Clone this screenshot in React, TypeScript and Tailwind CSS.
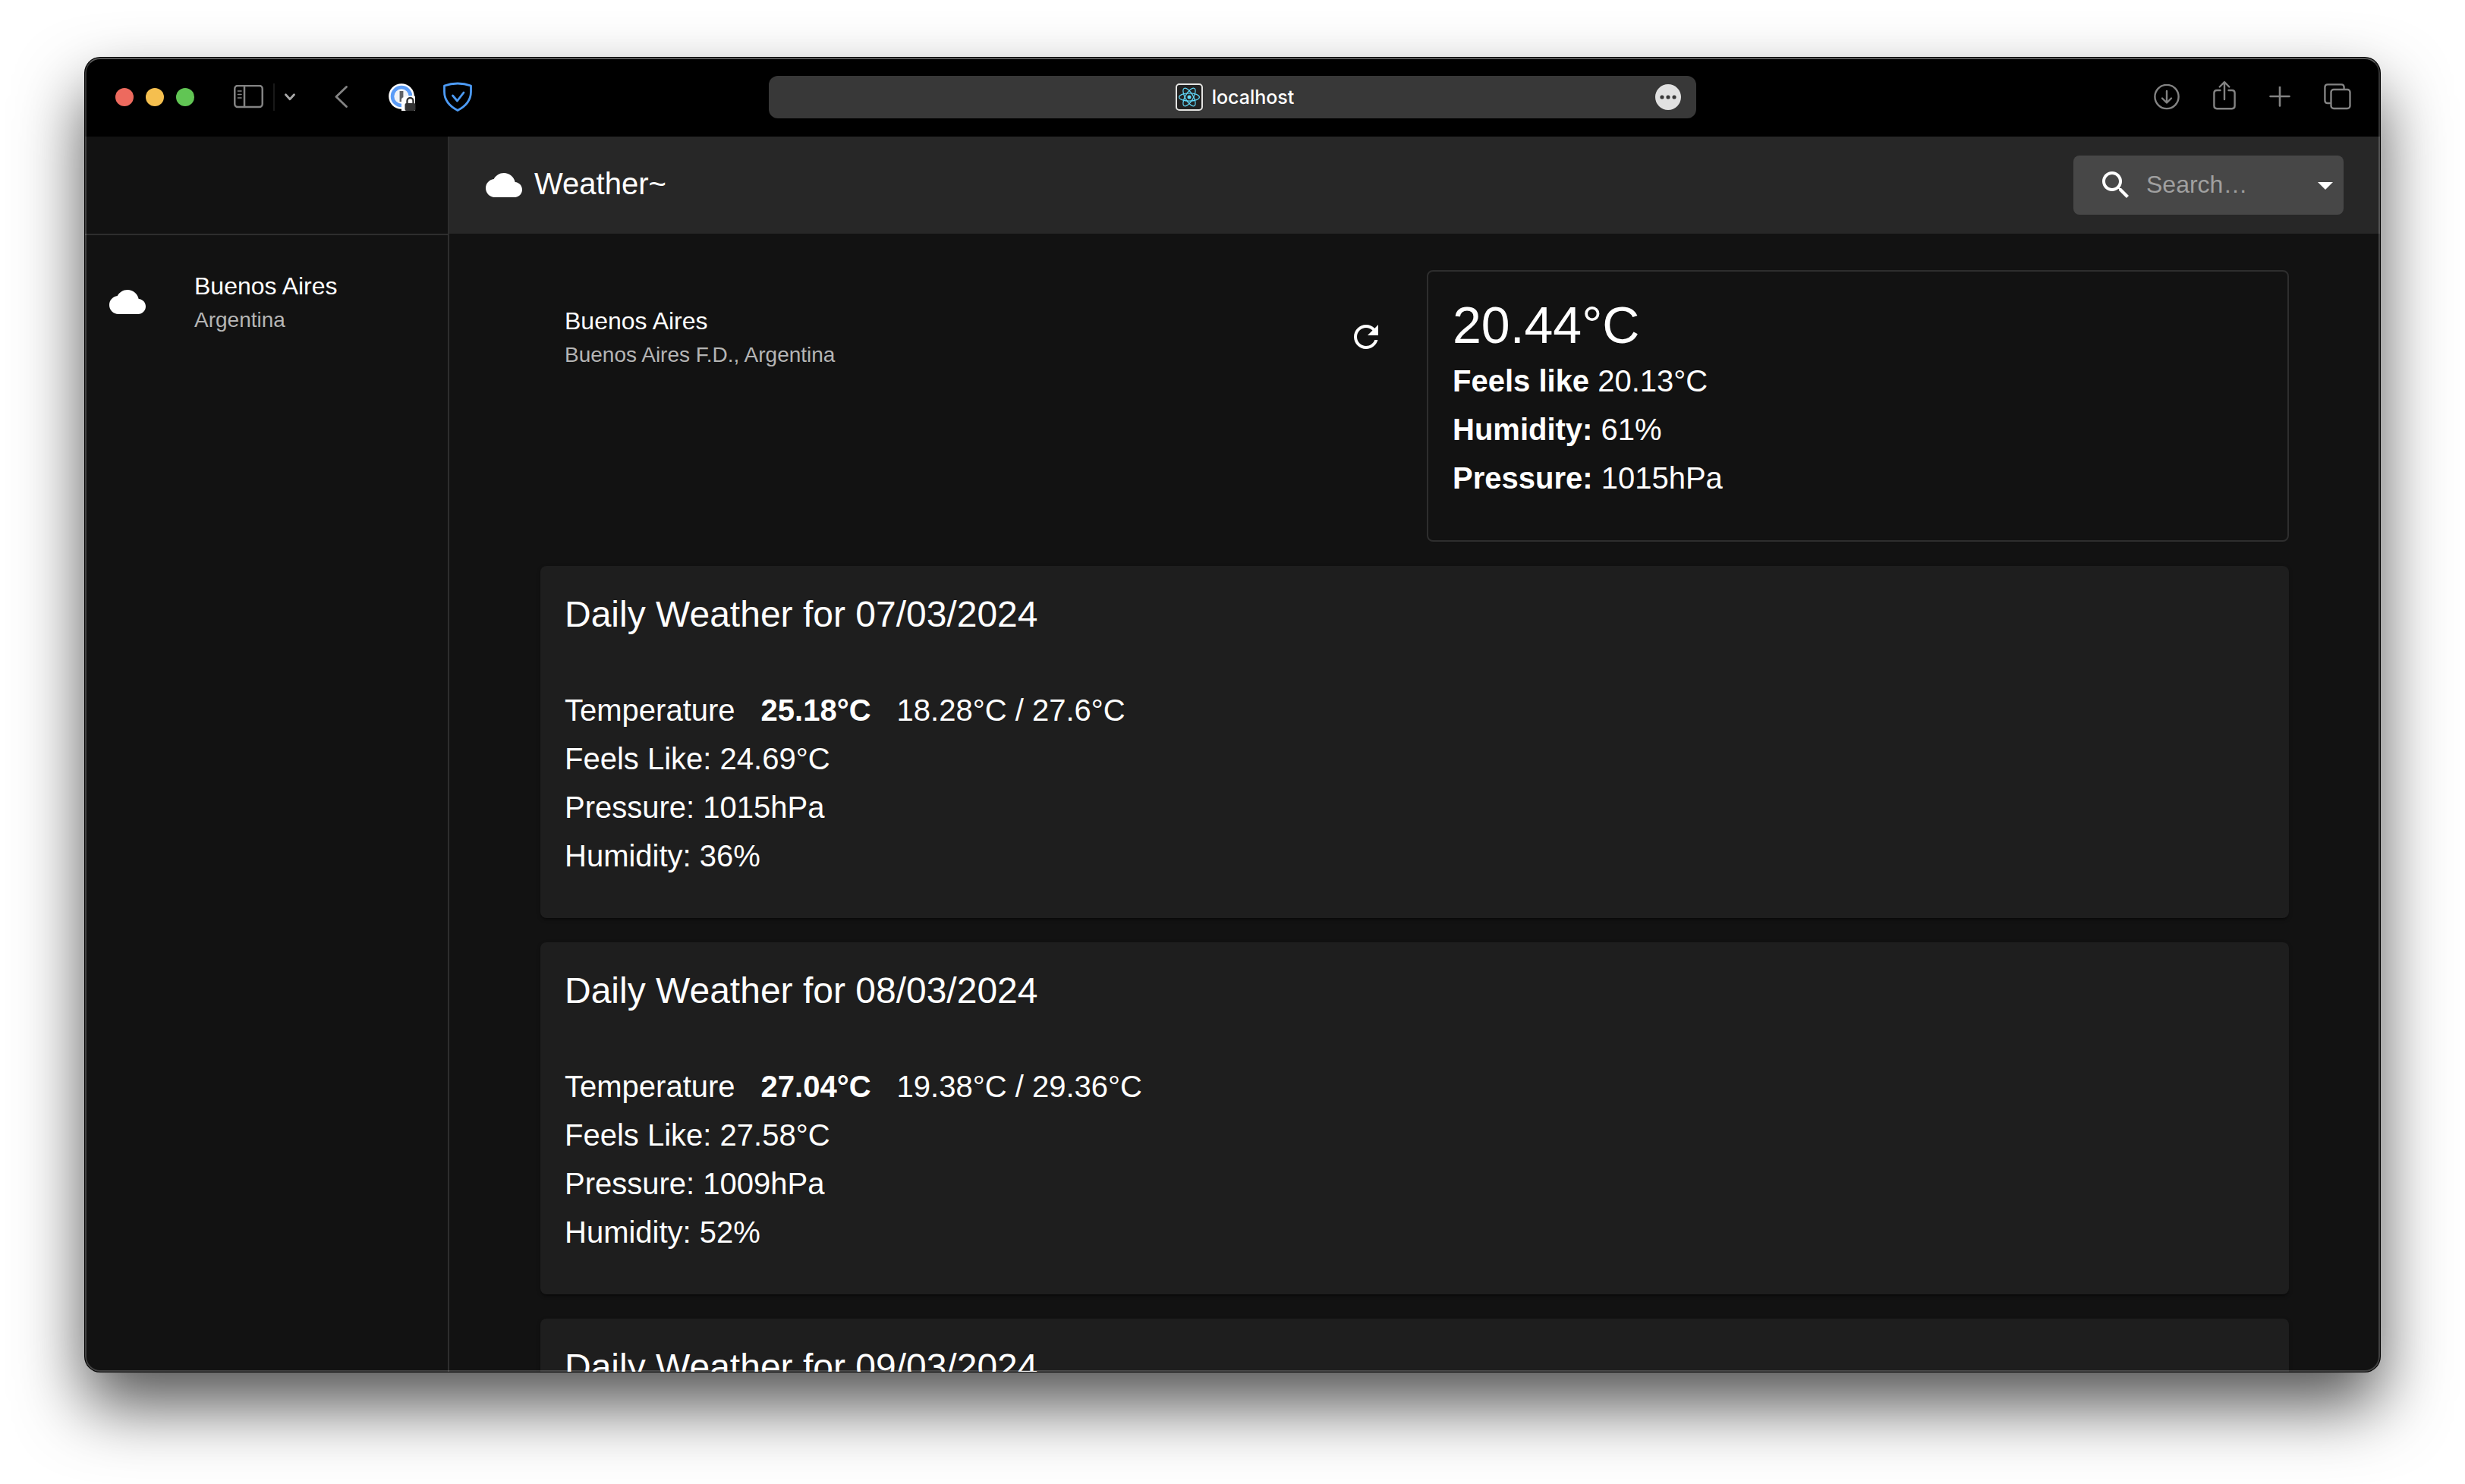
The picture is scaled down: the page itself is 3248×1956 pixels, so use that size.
import React from "react";

type Details = {
  temp: string;
  min: string;
  max: string;
  feels: string;
  pressure: string;
  humidity: string;
};

type Day = { date: string; details?: Details };

const days: Day[] = [
  {
    date: "07/03/2024",
    details: { temp: "25.18", min: "18.28", max: "27.6", feels: "24.69", pressure: "1015", humidity: "36" },
  },
  {
    date: "08/03/2024",
    details: { temp: "27.04", min: "19.38", max: "29.36", feels: "27.58", pressure: "1009", humidity: "52" },
  },
  { date: "09/03/2024" },
];

function CloudIcon() {
  return (
    <svg viewBox="0 0 24 24" className="size-12 shrink-0 fill-white" aria-hidden="true">
      <path d="M19.35 10.04C18.67 6.59 15.64 4 12 4 9.11 4 6.6 5.64 5.35 8.04 2.34 8.36 0 10.91 0 14c0 3.31 2.69 6 6 6h13c2.76 0 5-2.24 5-5 0-2.64-2.05-4.78-4.65-4.96z" />
    </svg>
  );
}

function TitleBar() {
  return (
    <header className="grid h-[104px] shrink-0 grid-cols-[1fr_minmax(0,1222px)_1fr] items-center bg-black text-[#838383]">
      <div className="flex items-center pl-10">
        <div className="flex gap-4">
          <button aria-label="Close" className="size-6 rounded-full bg-[#ed6a5e]" />
          <button aria-label="Minimize" className="size-6 rounded-full bg-[#f5bf4f]" />
          <button aria-label="Zoom" className="size-6 rounded-full bg-[#61c554]" />
        </div>
        <button aria-label="Sidebar" className="ml-[52px]">
          <svg width="40" height="32" viewBox="0 0 40 32" fill="none" stroke="currentColor" strokeWidth="2.5" className="block">
            <rect x="1.25" y="1" width="36.5" height="28" rx="4" />
            <path d="M14 1.5v27.5" />
            <path d="M5.5 8h4.5M5.5 12.5h4.5M5.5 17h4.5" strokeWidth="1.6" strokeLinecap="round" />
          </svg>
        </button>
        <div className="ml-3 h-9 w-0.5 bg-[#191919]" />
        <button aria-label="Tab groups" className="ml-[13px] text-[#a8a8a8]">
          <svg width="14" height="10" viewBox="0 0 14 10" fill="none" stroke="currentColor" strokeWidth="2.8" strokeLinecap="round" strokeLinejoin="round" className="block">
            <path d="M1.500 1.800 7 7.800l5.500-6" />
          </svg>
        </button>
        <button aria-label="Back" className="ml-[52px]">
          <svg width="18" height="30" viewBox="0 0 18 30" fill="none" stroke="currentColor" strokeWidth="2.8" strokeLinecap="round" strokeLinejoin="round" className="block">
            <path d="M15.500 1.500 2 14.500l13.500 13" />
          </svg>
        </button>
        <button aria-label="Password manager" className="ml-[53px]">
          <svg width="36" height="36" viewBox="0 0 36 36" className="block">
            <circle cx="17" cy="17" r="16.800" fill="#fff" />
            <circle cx="17" cy="17" r="12" fill="#f1f3f7" stroke="#5b9cf7" strokeWidth="4.600" />
            <rect x="14.600" y="10" width="4.800" height="14" fill="#5f6165" />
            <path d="M17 26V20q5-4 16-4 2 0 2 2v18H17z" fill="#fff" />
            <path d="M24.500 27v-4a4 4 0 0 1 8 0v4" fill="none" stroke="#333" strokeWidth="2.400" />
            <rect x="21.500" y="26" width="14" height="10" rx="2" fill="#333" />
          </svg>
        </button>
        <button aria-label="Content blocker" className="ml-9 text-[#4d9bf5]">
          <svg width="38" height="40" viewBox="0 0 38 40" fill="none" stroke="currentColor" strokeWidth="2.800" strokeLinecap="round" strokeLinejoin="round" className="block">
            <path d="M1.500 5Q10 2 19 2t17.500 3v8c0 11-7 19-17.500 24.500C8.500 32 1.500 24 1.500 13z" />
            <path d="M12.500 18l6 7 8.500-11" />
          </svg>
        </button>
      </div>

      <div className="grid h-14 grid-cols-[1fr_auto_1fr] items-center rounded-xl bg-[#383838]">
        <span />
        <a href="#" className="flex items-center gap-3 pl-1.5 font-['Inter',sans-serif] text-[25px] leading-9 font-medium text-white">
          <svg width="36" height="36" viewBox="0 0 36 36" fill="none" className="shrink-0" aria-hidden="true">
            <rect x="1" y="1" width="34" height="34" rx="4" fill="#222" stroke="#e4e4e2" strokeWidth="2" />
            <g stroke="#61dafb" strokeWidth="1.200">
              <ellipse cx="18" cy="18" rx="13.400" ry="5.200" />
              <ellipse cx="18" cy="18" rx="13.400" ry="5.200" transform="rotate(60 18 18)" />
              <ellipse cx="18" cy="18" rx="13.400" ry="5.200" transform="rotate(120 18 18)" />
            </g>
            <circle cx="18" cy="18" r="2.500" fill="#61dafb" />
          </svg>
          localhost
        </a>
        <button aria-label="Page menu" className="mr-5 justify-self-end">
          <svg width="34" height="34" viewBox="0 0 33 33" className="block">
            <circle cx="16.500" cy="16.500" r="16.500" fill="#e1e1e1" />
            <g fill="#383838">
              <circle cx="8.700" cy="16.500" r="2.500" />
              <circle cx="16.500" cy="16.500" r="2.500" />
              <circle cx="24.300" cy="16.500" r="2.500" />
            </g>
          </svg>
        </button>
      </div>

      <div className="flex items-center justify-end gap-11 pr-[38px]">
        <button aria-label="Downloads">
          <svg width="34" height="34" viewBox="0 0 34 34" fill="none" stroke="currentColor" strokeWidth="2.400" strokeLinecap="round" strokeLinejoin="round" className="block">
            <circle cx="17" cy="16.500" r="15.600" />
            <path d="M17 9v15M11 18.500l6 6 6-6" />
          </svg>
        </button>
        <button aria-label="Share">
          <svg width="30" height="44" viewBox="0 0 30 44" fill="none" stroke="currentColor" strokeWidth="2.400" strokeLinecap="round" strokeLinejoin="round" className="block">
            <path d="M9.500 13H5q-3.600 0-3.600 3.600v17q0 3.600 3.600 3.600h20q3.600 0 3.600-3.600v-17Q28.600 13 25 13h-4.500" />
            <path d="M15 25V2.500M8.700 8.500 15 2.200l6.300 6.300" />
          </svg>
        </button>
        <button aria-label="New tab">
          <svg width="28" height="28" viewBox="0 0 28 28" fill="none" stroke="currentColor" strokeWidth="2.600" strokeLinecap="round" className="block">
            <path d="M14 .5v25M1.500 13h25" />
          </svg>
        </button>
        <button aria-label="Tab overview">
          <svg width="36" height="36" viewBox="0 0 36 36" fill="none" stroke="currentColor" strokeWidth="2.400" strokeLinecap="round" className="block">
            <rect x="9.500" y="8" width="25" height="25" rx="3.500" />
            <path d="M8 26H5Q1.400 26 1.400 22.500V5Q1.400 1.400 5 1.400h18q3.600 0 3.600 3.600v2" />
          </svg>
        </button>
      </div>
    </header>
  );
}

function AppBar() {
  return (
    <div className="flex h-32 shrink-0 items-center justify-between bg-[#272727] px-12">
      <div className="flex items-center gap-4">
        <CloudIcon />
        <h1 className="pb-1 text-[40px] leading-[64px]">Weather~</h1>
      </div>
      <div className="flex h-[78px] w-[356px] items-center rounded-lg bg-[#474747] pl-8">
        <svg viewBox="0 0 24 24" className="size-12 shrink-0 fill-white" aria-hidden="true">
          <path d="M15.500 14h-.79l-.28-.27C15.410 12.590 16 11.110 16 9.500 16 5.910 13.090 3 9.500 3S3 5.910 3 9.500 5.910 16 9.500 16c1.610 0 3.090-.59 4.230-1.570l.27.28v.79l5 4.990L20.490 19l-4.990-5zm-6 0C7.010 14 5 11.990 5 9.500S7.010 5 9.500 5 14 7.010 14 9.500 11.990 14 9.500 14z" />
        </svg>
        <input
          type="text"
          aria-label="Search"
          placeholder="Search…"
          className="ml-4 min-w-0 flex-1 bg-transparent pb-0.5 text-[32px] leading-[46px] text-white outline-none placeholder:text-[#a0a0a0]"
        />
        <button aria-label="Open">
          <svg viewBox="0 0 24 24" className="size-12 fill-white">
            <path d="M7 10l5 5 5-5z" />
          </svg>
        </button>
      </div>
    </div>
  );
}

function Place({ name, region }: { name: string; region: string }) {
  return (
    <div className="min-w-0 flex-1">
      <p className="mb-0.5 text-[32px] leading-[46px]">{name}</p>
      <p className="text-[28px] leading-10 text-[#b5b5b5]">{region}</p>
    </div>
  );
}

function DayCard({ date, details }: Day) {
  return (
    <article className="rounded-lg bg-[#1e1e1e] px-8 pt-8 pb-[50px] text-[40px] leading-[64px] shadow-[0_4px_2px_-2px_rgba(0,0,0,0.2),0_2px_2px_0_rgba(0,0,0,0.14),0_2px_6px_0_rgba(0,0,0,0.12)]">
      <h2 className="mb-[62px] text-[48px] leading-[64px]">Daily Weather for {date}</h2>
      {details && (
        <>
          <div className="flex gap-[34px]">
            <span>Temperature</span>
            <strong className="font-bold">{details.temp}°C</strong>
            <span>
              {details.min}°C / {details.max}°C
            </span>
          </div>
          <p>Feels Like: {details.feels}°C</p>
          <p>Pressure: {details.pressure}hPa</p>
          <p>Humidity: {details.humidity}%</p>
        </>
      )}
    </article>
  );
}

export default function App() {
  return (
    <div className="flex h-screen flex-col overflow-hidden bg-white px-28 pt-[76px] pb-[148px] font-['Liberation_Sans',Arial,sans-serif] text-white">
      <div className="relative flex min-h-0 flex-1 flex-col overflow-hidden rounded-[20px] bg-[#121212] shadow-[0_0_0_1px_#000,0_44px_88px_rgba(0,0,0,0.68)]">
        <TitleBar />
        <div className="flex min-h-0 flex-1">
          <nav aria-label="Places" className="w-[480px] shrink-0 border-r-2 border-[#2e2e2e]">
            <div className="h-32" />
            <hr className="border-t-2 border-[#2e2e2e]" />
            <ul className="py-4">
              <li>
                <button className="flex w-full items-center gap-16 px-8 py-7 text-left">
                  <CloudIcon />
                  <Place name="Buenos Aires" region="Argentina" />
                </button>
              </li>
            </ul>
          </nav>
          <div className="flex min-w-0 flex-1 flex-col">
            <AppBar />
            <main className="min-h-0 flex-1 overflow-hidden p-12">
              <div className="mx-auto flex max-w-[2304px] flex-col gap-8">
                <section className="grid grid-cols-2 gap-8">
                  <div className="flex items-center self-start py-11 pr-6 pl-8">
                    <Place name="Buenos Aires" region="Buenos Aires F.D., Argentina" />
                    <button aria-label="Refresh">
                      <svg viewBox="0 0 24 24" className="size-12 fill-white">
                        <path d="M17.650 6.350C16.200 4.900 14.210 4 12 4c-4.420 0-7.990 3.580-7.990 8s3.570 8 7.990 8c3.730 0 6.840-2.550 7.730-6h-2.080c-.82 2.330-3.040 4-5.650 4-3.310 0-6-2.690-6-6s2.690-6 6-6c1.660 0 3.140.69 4.220 1.780L13 11h7V4l-2.350 2.350z" />
                      </svg>
                    </button>
                  </div>
                  <div className="rounded-lg border-2 border-[#2e2e2e] px-8 pt-7 pb-[50px] text-[40px] leading-[64px]">
                    <p className="text-[68px] leading-[84px]">20.44°C</p>
                    <p>
                      <strong className="font-bold">Feels like</strong> 20.13°C
                    </p>
                    <p>
                      <strong className="font-bold">Humidity:</strong> 61%
                    </p>
                    <p>
                      <strong className="font-bold">Pressure:</strong> 1015hPa
                    </p>
                  </div>
                </section>
                {days.map((day) => (
                  <DayCard key={day.date} date={day.date} details={day.details} />
                ))}
              </div>
            </main>
          </div>
        </div>
        <div className="pointer-events-none absolute inset-0 rounded-[20px] border-2 border-white/20 border-t-white/35" />
      </div>
    </div>
  );
}
